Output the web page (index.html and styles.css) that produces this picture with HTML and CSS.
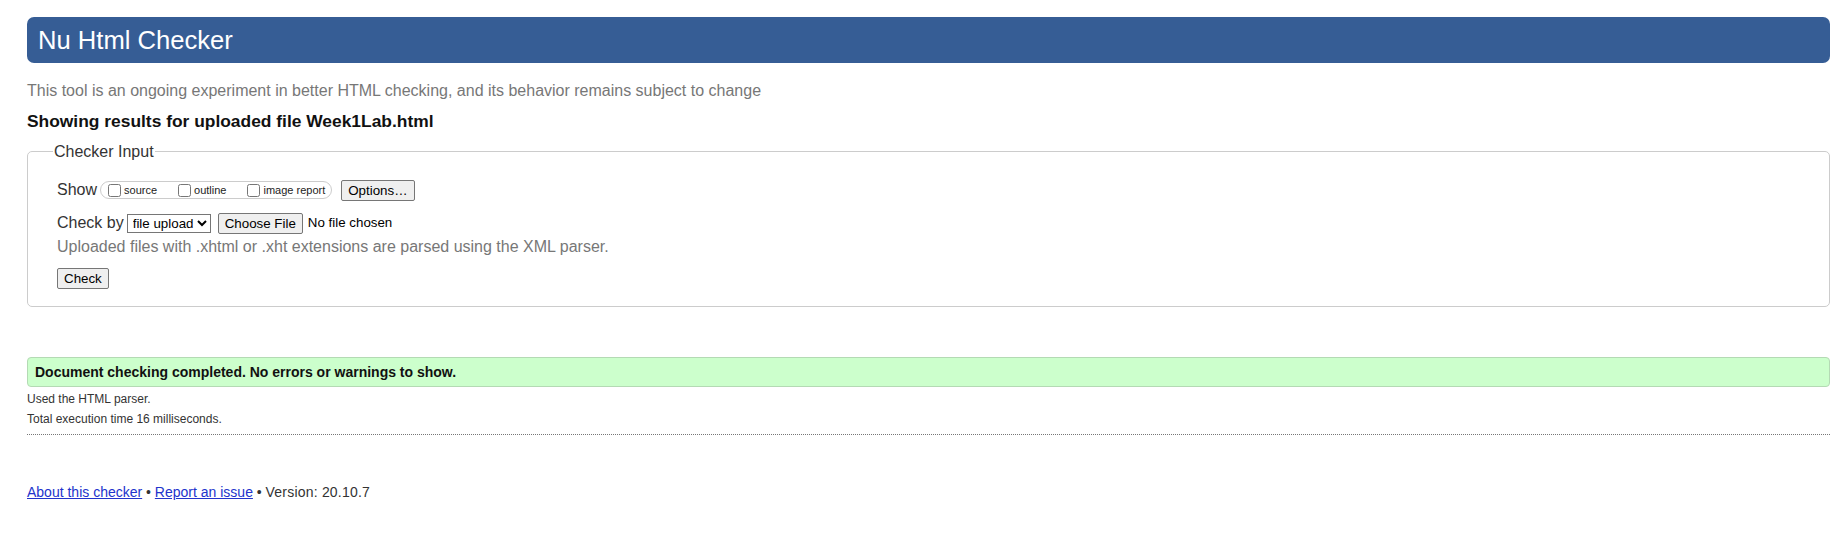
FILE: index.html
```html
<!DOCTYPE html>
<html lang="en">
<head>
<meta charset="utf-8">
<title>Nu Html Checker</title>
<link rel="stylesheet" href="styles.css">
</head>
<body>
<h1 class="title">Nu Html Checker</h1>
<p class="intro">This tool is an ongoing experiment in better HTML checking, and its behavior remains subject to change</p>
<p class="showing">Showing results for uploaded file Week1Lab.html</p>
<fieldset class="input">
  <legend class="legend">Checker Input</legend>
  <div class="row">
    <span class="label">Show</span>
    <span class="group">
      <label class="opt"><input type="checkbox" class="cb">source</label>
      <label class="opt"><input type="checkbox" class="cb">outline</label>
      <label class="opt last"><input type="checkbox" class="cb">image report</label>
    </span>
    <button class="btn options" type="button">Options…</button>
  </div>
  <div class="row gap">
    <span class="label">Check by</span>
    <select class="sel"><option>file upload</option></select>
    <button class="btn choose" type="button">Choose File</button>
    <span class="nofile">No file chosen</span>
  </div>
  <div class="row note">Uploaded files with .xhtml or .xht extensions are parsed using the XML parser.</div>
  <div class="row gap short">
    <button class="btn" type="button">Check</button>
  </div>
</fieldset>
<div class="success">Document checking completed. No errors or warnings to show.</div>
<div class="details">
  <p class="detail">Used the HTML parser.</p>
  <p class="detail">Total execution time 16 milliseconds.</p>
</div>
<p class="footer"><a href="#" class="link">About this checker</a> • <a href="#" class="link">Report an issue</a> • <span class="version">Version: 20.10.7</span></p>
</body>
</html>
```
FILE: styles.css
```css
html { background: #fff; }
body {
  margin: 0;
  padding: 17px 3px 0 27px;
  font-family: "Liberation Sans", Arial, sans-serif;
  color: #222;
}
.title {
  margin: 0;
  height: 46px;
  line-height: 46px;
  padding-left: 11px;
  background: #365d95;
  color: #fff;
  font-size: 25.6px;
  font-weight: normal;
  border-radius: 7px;
}
.intro {
  margin: 16px 0 0;
  font-size: 16px;
  line-height: 23px;
  color: #777;
}
.showing {
  margin: 9px 0 0;
  font-size: 17.4px;
  font-weight: bold;
  line-height: 21px;
  color: #111;
}
.input {
  margin: 10px 0 0;
  padding: 17px 20px 17px 29px;
  border: 1px solid #ccc;
  border-radius: 5px;
}
.legend {
  margin-left: -4px;
  padding: 0 1px;
  font-size: 16px;
  line-height: 19px;
  color: #333;
}
.row {
  display: flex;
  align-items: center;
  height: 24px;
  font-size: 16px;
  line-height: 24px;
  color: #333;
}
.row.gap { margin-top: 9px; }
.row.short { height: 21px; }
.note { color: #777; }
.label { margin-right: 3px; }
.group {
  display: flex;
  align-items: center;
  height: 16px;
  padding: 0 6px 0 7px;
  border: 1px solid #ccc;
  border-radius: 9px;
  font-size: 11px;
  line-height: 16px;
  color: #222;
}
.opt {
  display: flex;
  align-items: center;
  margin-right: 21px;
}
.opt.last { margin-right: 0; }
.cb {
  margin: 0 3px 0 0;
  width: 13px;
  height: 13px;
}
.btn {
  height: 21px;
  padding: 0 6px;
  font-family: "Liberation Sans", Arial, sans-serif;
  font-size: 13.333px;
  color: #000;
  background: #efefef;
  border: 1px solid #767676;
  border-radius: 2px;
}
.options { margin-left: 9px; }
.sel {
  height: 19px;
  font-family: "Liberation Sans", Arial, sans-serif;
  font-size: 13.333px;
  color: #000;
  background: #fff;
  border: 1px solid #767676;
  border-radius: 0;
  padding: 0 0 0 1px;
}
.choose { margin-left: 7px; }
.nofile {
  margin-left: 5px;
  font-size: 13.333px;
  color: #000;
}
.success {
  margin: 50px 0 0;
  height: 28px;
  line-height: 28px;
  padding-left: 7px;
  font-size: 14px;
  font-weight: bold;
  color: #111;
  background: #ccffcc;
  border: 1px solid #b4dab4;
  border-radius: 4px;
}
.details {
  margin-top: 2px;
  padding-bottom: 5px;
  border-bottom: 1px dotted #777;
}
.detail {
  margin: 0;
  font-size: 12px;
  line-height: 20px;
  color: #333;
}
.footer {
  margin: 47px 0 0;
  font-size: 14px;
  line-height: 20px;
  color: #333;
}
.version { letter-spacing: 0.2px; }
.link { color: #2233cc; }
```
